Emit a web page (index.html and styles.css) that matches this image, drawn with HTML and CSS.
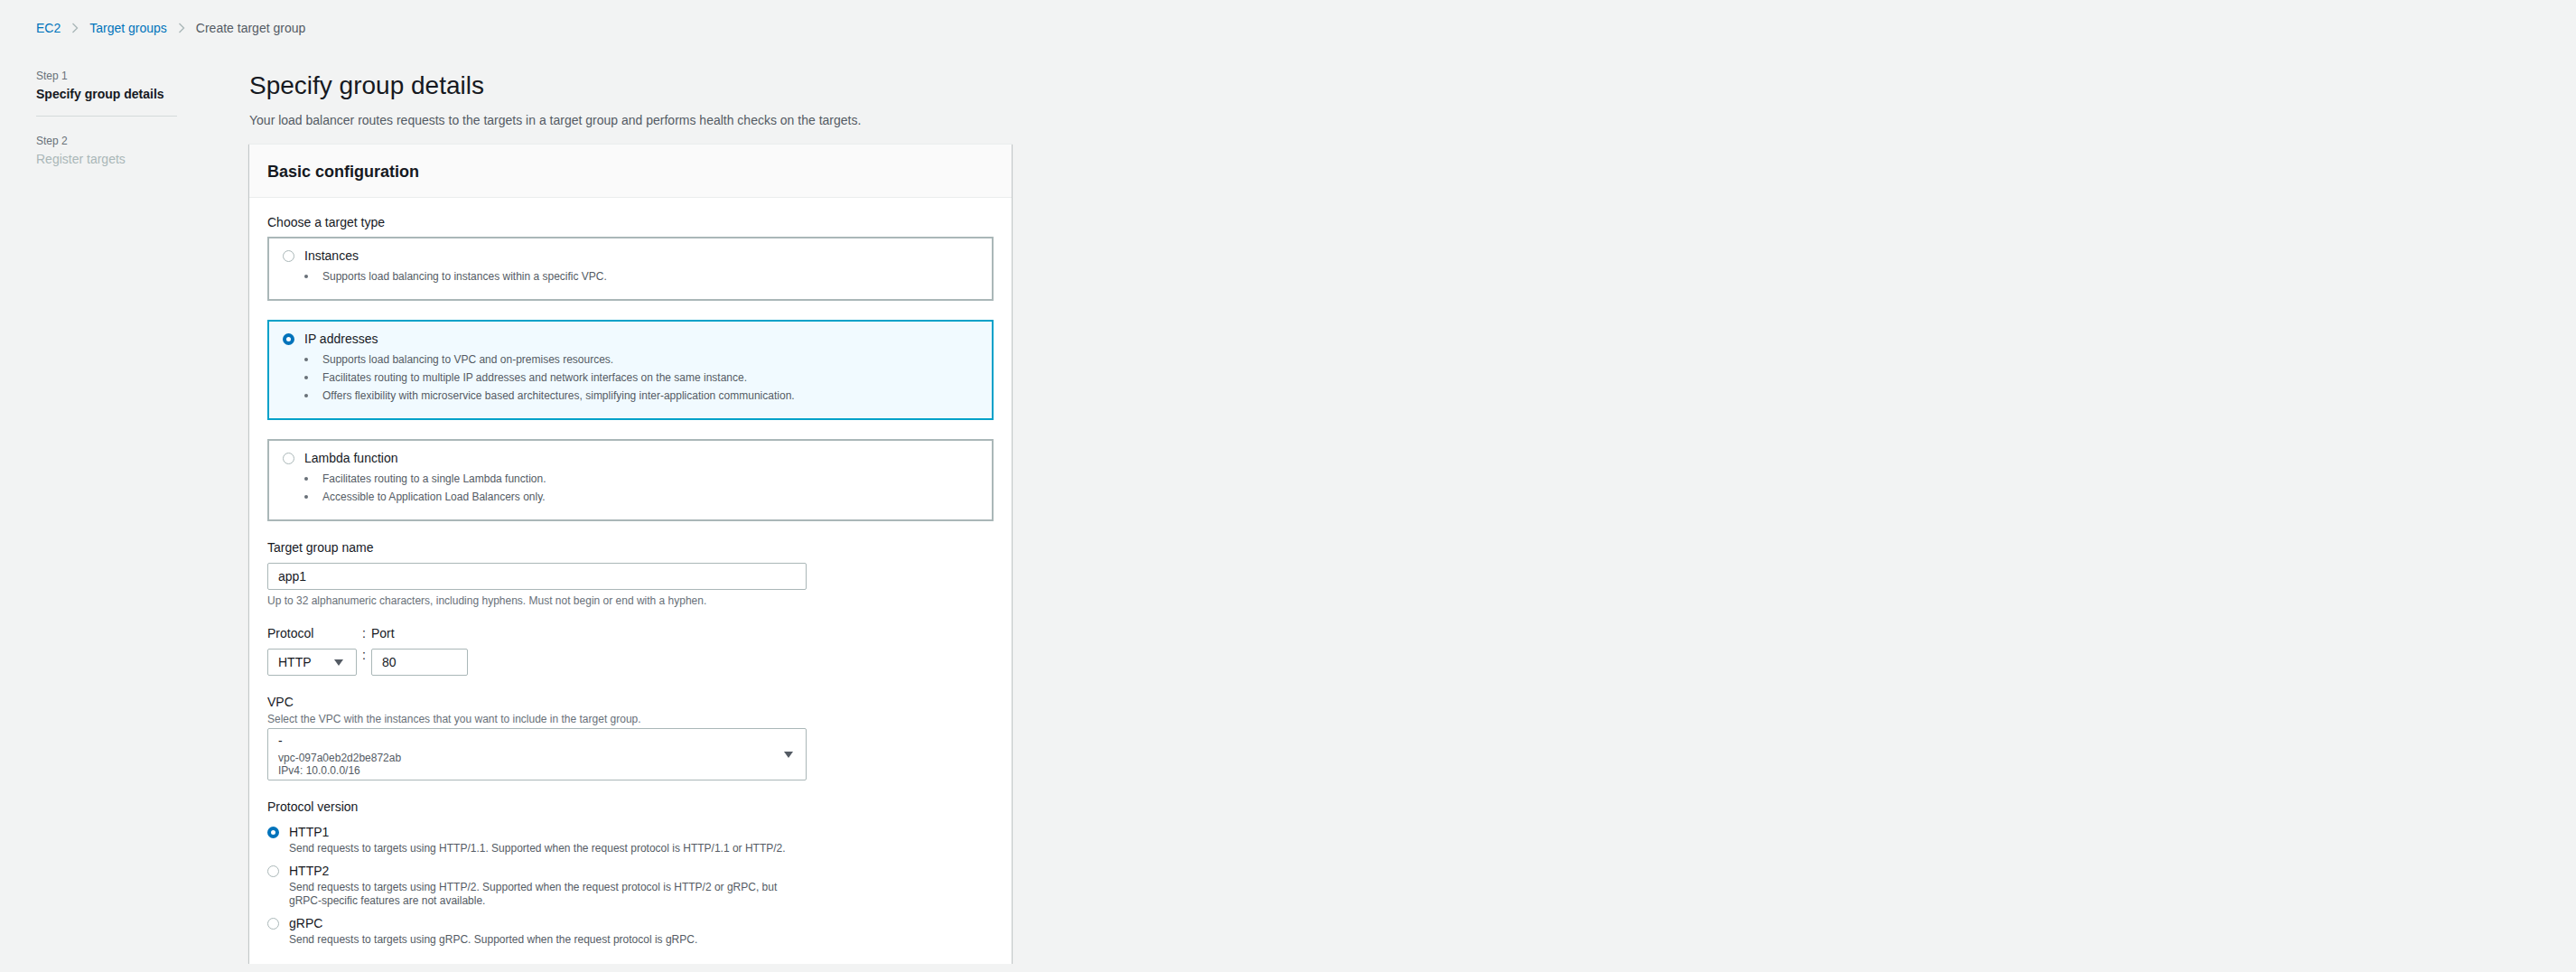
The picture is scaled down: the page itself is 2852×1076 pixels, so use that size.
FILE: index.html
```html
<!DOCTYPE html>
<html lang="en">
<head>
    <meta charset="UTF-8">
    <meta name="viewport" content="width=device-width, initial-scale=1.0">
    <title>Create target group | EC2</title>
    <link rel="stylesheet" href="styles.css">
</head>
<body>
    <div class="page">
        <nav class="breadcrumbs">
            <a href="#">EC2</a>
            <svg class="chevron" viewBox="0 0 8 12" width="8" height="12"><path d="M1.5 1 L6.5 6 L1.5 11" /></svg>
            <a href="#">Target groups</a>
            <svg class="chevron" viewBox="0 0 8 12" width="8" height="12"><path d="M1.5 1 L6.5 6 L1.5 11" /></svg>
            <span class="current">Create target group</span>
        </nav>

        <div class="layout">
            <!-- wizard steps -->
            <aside class="steps">
                <div class="step active">
                    <div class="step-num">Step 1</div>
                    <div class="step-name">Specify group details</div>
                </div>
                <div class="step">
                    <div class="step-num">Step 2</div>
                    <div class="step-name">Register targets</div>
                </div>
            </aside>

            <main class="content">
                <h1>Specify group details</h1>
                <p class="intro">Your load balancer routes requests to the targets in a target group and performs health checks on the targets.</p>

                <section class="card">
                    <div class="card-header">
                        <h2>Basic configuration</h2>
                    </div>
                    <div class="card-body">
                        <div class="label">Choose a target type</div>
                        <div class="tiles">
                            <div class="tile">
                                <div class="tile-head">
                                    <span class="radio"></span>
                                    <span>Instances</span>
                                </div>
                                <ul class="tile-list">
                                    <li>Supports load balancing to instances within a specific VPC.</li>
                                </ul>
                            </div>
                            <div class="tile selected">
                                <div class="tile-head">
                                    <span class="radio checked"></span>
                                    <span>IP addresses</span>
                                </div>
                                <ul class="tile-list">
                                    <li>Supports load balancing to VPC and on-premises resources.</li>
                                    <li>Facilitates routing to multiple IP addresses and network interfaces on the same instance.</li>
                                    <li>Offers flexibility with microservice based architectures, simplifying inter-application communication.</li>
                                </ul>
                            </div>
                            <div class="tile">
                                <div class="tile-head">
                                    <span class="radio"></span>
                                    <span>Lambda function</span>
                                </div>
                                <ul class="tile-list">
                                    <li>Facilitates routing to a single Lambda function.</li>
                                    <li>Accessible to Application Load Balancers only.</li>
                                </ul>
                            </div>
                        </div>

                        <div class="field">
                            <div class="label">Target group name</div>
                            <div class="input wide">app1</div>
                            <div class="help">Up to 32 alphanumeric characters, including hyphens. Must not begin or end with a hyphen.</div>
                        </div>

                        <div class="field protocol-port">
                            <div class="label">Protocol</div>
                            <div class="label colon">:</div>
                            <div class="label">Port</div>
                            <div class="input select">
                                <span>HTTP</span>
                                <svg class="caret" viewBox="0 0 10 7" width="10" height="7"><path d="M0 0 H10 L5 7 Z" /></svg>
                            </div>
                            <div class="colon-mid">:</div>
                            <div class="input">80</div>
                        </div>

                        <div class="field">
                            <div class="label">VPC</div>
                            <div class="help vpc-help">Select the VPC with the instances that you want to include in the target group.</div>
                            <div class="input wide select vpc-select">
                                <div class="vpc-lines">
                                    <div class="vpc-name">-</div>
                                    <div class="vpc-meta">vpc-097a0eb2d2be872ab</div>
                                    <div class="vpc-meta">IPv4: 10.0.0.0/16</div>
                                </div>
                                <svg class="caret" viewBox="0 0 10 7" width="10" height="7"><path d="M0 0 H10 L5 7 Z" /></svg>
                            </div>
                        </div>

                        <div class="field">
                            <div class="label">Protocol version</div>
                            <div class="radio-group">
                                <div class="option">
                                    <div class="option-head">
                                        <span class="radio checked"></span>
                                        <span>HTTP1</span>
                                    </div>
                                    <div class="option-desc">Send requests to targets using HTTP/1.1. Supported when the request protocol is HTTP/1.1 or HTTP/2.</div>
                                </div>
                                <div class="option">
                                    <div class="option-head">
                                        <span class="radio"></span>
                                        <span>HTTP2</span>
                                    </div>
                                    <div class="option-desc">Send requests to targets using HTTP/2. Supported when the request protocol is HTTP/2 or gRPC, but gRPC&#8209;specific features are not available.</div>
                                </div>
                                <div class="option">
                                    <div class="option-head">
                                        <span class="radio"></span>
                                        <span>gRPC</span>
                                    </div>
                                    <div class="option-desc">Send requests to targets using gRPC. Supported when the request protocol is gRPC.</div>
                                </div>
                            </div>
                        </div>
                    </div>
                </section>
            </main>
        </div>
    </div>
</body>
</html>
```

FILE: styles.css
```css
/* AWS console style: create target group wizard */
body {
    margin: 0;
    background: #f2f3f3;
    font-family: "Liberation Sans", Arial, sans-serif;
    font-size: 14px;
    line-height: 20px;
    color: #16191f;
}

.page {
    padding: 21px 40px 0;
}

.breadcrumbs {
    display: flex;
    align-items: center;
    gap: 12px;
    line-height: 20px;
}

.breadcrumbs a {
    color: #0073bb;
    text-decoration: none;
}

.breadcrumbs .current {
    color: #545b64;
}

.chevron path {
    fill: none;
    stroke: #aab7b8;
    stroke-width: 1.4;
}

.layout {
    display: flex;
    gap: 80px;
    margin-top: 35px;
}

/* steps */
.steps {
    width: 156px;
    flex-shrink: 0;
}

.step-num {
    font-size: 12px;
    line-height: 16px;
    color: #687078;
}

.step-name {
    margin-top: 2px;
    color: #aab7b8;
}

.step.active {
    padding-bottom: 14px;
    border-bottom: 1px solid #d5dbdb;
}

.step.active .step-name {
    font-weight: bold;
    color: #16191f;
}

.step + .step {
    margin-top: 19px;
}

/* main */
.content {
    width: 844px;
}

h1 {
    margin: 1px 0 10px;
    font-size: 28px;
    line-height: 36px;
    font-weight: normal;
}

.intro {
    margin: 0 0 16px;
    color: #545b64;
}

.card {
    background: #fff;
    border-top: 1px solid #eaeded;
    box-shadow: 0 1px 1px 0 rgba(0, 28, 36, 0.3), 1px 1px 1px 0 rgba(0, 28, 36, 0.15), -1px 1px 1px 0 rgba(0, 28, 36, 0.15);
}

.card-header {
    background: #fafafa;
    padding: 18px 20px 16px;
    border-bottom: 1px solid #eaeded;
}

.card-header h2 {
    margin: 0;
    font-size: 18px;
    line-height: 24px;
    font-weight: bold;
}

.card-body {
    padding: 17px 20px 19px;
}

.label {
    line-height: 20px;
}

/* target type tiles */
.tiles {
    display: flex;
    flex-direction: column;
    gap: 21px;
    margin-top: 6px;
}

.tile {
    border: 2px solid #aab7b8;
    padding: 9px 15px 15px;
}

.tile.selected {
    border-color: #00a1c9;
    background: #f1faff;
}

.tile-head,
.option-head {
    display: flex;
    align-items: center;
    gap: 11px;
}

.radio {
    width: 13px;
    height: 13px;
    box-sizing: border-box;
    border: 1px solid #aab7b8;
    border-radius: 50%;
    background: #fff;
    flex-shrink: 0;
}

.radio.checked {
    border: 4px solid #0073bb;
}

.tile-list {
    list-style: none;
    margin: 3px 0 0 24px;
    padding: 0;
    font-size: 12px;
    line-height: 20px;
    color: #545b64;
}

.tile-list li {
    position: relative;
    padding-left: 20px;
}

.tile-list li::before {
    content: "";
    position: absolute;
    left: 0;
    top: 8px;
    width: 4px;
    height: 4px;
    border-radius: 50%;
    background: #687078;
}

/* form fields */
.field {
    margin-top: 19px;
}

.input {
    box-sizing: border-box;
    height: 30px;
    margin-top: 7px;
    padding: 0 11px;
    border: 1px solid #aab7b8;
    border-radius: 2px;
    background: #fff;
    display: flex;
    align-items: center;
}

.input.wide {
    width: 597px;
}

.help {
    margin-top: 5px;
    font-size: 12px;
    line-height: 14px;
    color: #687078;
}

.select {
    justify-content: space-between;
    padding-right: 14px;
}

.caret path {
    fill: #545b64;
}

.protocol-port {
    display: grid;
    grid-template-columns: 99px 16px 107px;
}

.protocol-port .colon {
    text-align: center;
}

.colon-mid {
    margin-top: 7px;
    text-align: center;
    line-height: 14px;
}

.vpc-help {
    margin-top: 2px;
}

.vpc-select {
    height: 58px;
    margin-top: 3px;
    padding-top: 4px;
    padding-bottom: 3px;
}

.vpc-name {
    line-height: 18px;
}

.vpc-meta {
    font-size: 12px;
    line-height: 14px;
    color: #545b64;
}

.vpc-name + .vpc-meta {
    margin-top: 3px;
}

/* protocol version */
.radio-group {
    margin-top: 8px;
}

.option + .option {
    margin-top: 7px;
}

.option-desc {
    max-width: 560px;
    margin: 1px 0 0 24px;
    font-size: 12px;
    line-height: 15px;
    color: #545b64;
}
```
